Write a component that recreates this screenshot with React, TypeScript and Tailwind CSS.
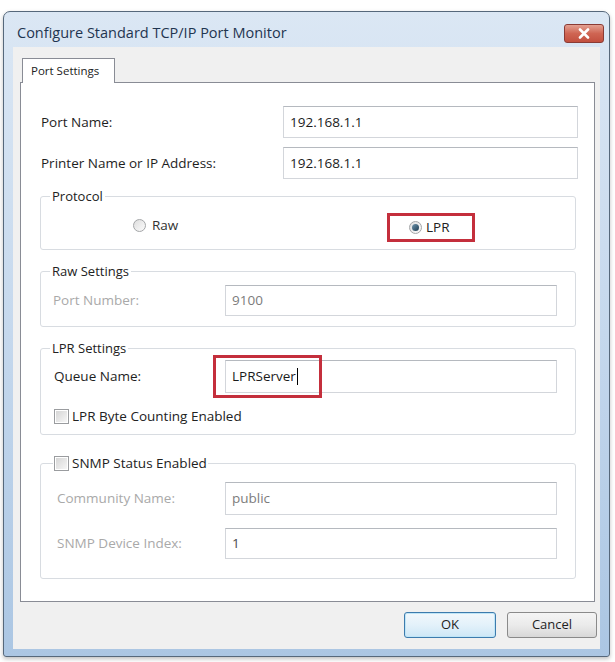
import type { ReactNode } from "react";

// Windows 7 style "Configure Standard TCP/IP Port Monitor" dialog.

function TextBox({
  value,
  disabled,
  className = "",
  children,
}: {
  value: string;
  disabled?: boolean;
  className?: string;
  children?: ReactNode;
}) {
  return (
    <div
      className={`relative flex items-center border border-[#d3d6db] border-t-[#b5b9bf] bg-white pl-[6px] ${
        disabled ? "text-[#7c7c7c]" : "text-[#1b1b1b]"
      } ${className}`}
    >
      <span>{value}</span>
      {children}
    </div>
  );
}

function Radio({ checked }: { checked?: boolean }) {
  return (
    <span className="flex h-[13px] w-[13px] items-center justify-center rounded-full border border-[#a4a6a8] bg-gradient-to-br from-[#dedede] to-[#fbfbfb]">
      {checked && (
        <span className="h-[7px] w-[7px] rounded-full bg-gradient-to-br from-[#6f95ad] to-[#1d3d52]" />
      )}
    </span>
  );
}

function CheckBox() {
  return (
    <span className="flex h-[15px] w-[15px] items-center justify-center border border-[#9a9c9f] bg-white">
      <span className="h-[11px] w-[11px] bg-gradient-to-br from-[#d6d6d6] to-[#f6f6f6]" />
    </span>
  );
}

function Legend({ children, className = "" }: { children: ReactNode; className?: string }) {
  return (
    <legend className={`ml-[9px] px-[2px] text-[13px] leading-[18px] text-[#222] ${className}`}>
      {children}
    </legend>
  );
}

export default function App() {
  return (
    <div className="h-[662px] w-[615px] bg-white pl-[3px] pt-[11px] font-['Open_Sans','Noto_Sans',sans-serif] text-[13.5px]">
      <div className="flex h-[646px] w-[607px] flex-col rounded-t-[7px] rounded-b-[3px] border border-[#56687b] bg-gradient-to-b from-[#dbe7f4] via-[#c5d8ed] to-[#abc6e3] shadow-[0_2px_4px_rgba(0,0,0,0.25)]">
        {/* title bar */}
        <div className="flex h-[35px] shrink-0 items-start pl-[13px] pr-[5px]">
          <span className="mt-[12px] text-[14.5px] leading-[18px] text-[#1f3550]">
            Configure Standard TCP/IP Port Monitor
          </span>
          <button
            type="button"
            className="ml-auto mt-[12px] flex h-[19px] w-[40px] items-center justify-center rounded-[3px] border border-[#8a3b35] bg-gradient-to-b from-[#e3a092] via-[#cf6553] to-[#c2503f]"
          >
            <svg width="12" height="11" viewBox="0 0 12 11">
              <path d="M2 1.5 L10 9.5 M10 1.5 L2 9.5" stroke="white" strokeWidth="2.6" strokeLinecap="round" />
            </svg>
          </button>
        </div>

        {/* client area */}
        <div className="mx-[9px] mb-[7px] flex flex-1 flex-col bg-[#f0f0f0] pt-[11px]">
          <div className="relative z-10 -mb-px ml-[9px] flex h-[25px] w-[93px] items-center border border-b-0 border-[#898c95] bg-white pl-[8px] text-[11.5px] text-[#222]">
            Port Settings
          </div>

          <div className="ml-[7px] mr-[5px] h-[520px] border border-[#898c95] bg-white pl-[20px] pr-[16px] pt-[23px] text-[#1e1e1e]">
            <div className="flex h-[32px] items-center">
              <span className="w-[242px]">Port Name:</span>
              <TextBox value="192.168.1.1" className="h-[32px] flex-1" />
            </div>
            <div className="mt-[9px] flex h-[32px] items-center">
              <span className="w-[242px]">Printer Name or IP Address:</span>
              <TextBox value="192.168.1.1" className="h-[32px] flex-1" />
            </div>

            {/* Protocol */}
            <fieldset className="-ml-px mt-[8px] w-[536px] rounded-[3px] border border-[#d8dce1] pb-[7px] pt-[8px]">
              <Legend>Protocol</Legend>
              <div className="flex h-[29px] items-center pl-[92px]">
                <label className="-mt-[4px] flex w-[254px] items-center gap-[6px] text-[#333]">
                  <Radio />
                  Raw
                </label>
                <label className="flex h-[29px] w-[88px] items-center gap-[4px] border-[3px] border-[#c42f3c] pl-[19px] text-[#222]">
                  <Radio checked />
                  LPR
                </label>
              </div>
            </fieldset>

            {/* Raw Settings */}
            <fieldset className="-ml-px mt-[12px] w-[536px] rounded-[3px] border border-[#d8dce1] pb-[10px] pt-[5px]">
              <Legend>Raw Settings</Legend>
              <div className="flex h-[31px] items-center pl-[12px]">
                <span className="w-[172px] text-[#a9a9a9]">Port Number:</span>
                <TextBox value="9100" disabled className="h-[31px] w-[332px]" />
              </div>
            </fieldset>

            {/* LPR Settings */}
            <fieldset className="-ml-px mt-[12px] w-[536px] rounded-[3px] border border-[#d8dce1] pb-[9px] pt-[3px]">
              <Legend>LPR Settings</Legend>
              <div className="flex h-[33px] items-center pl-[13px]">
                <span className="w-[171px]">Queue Name:</span>
                <TextBox value="LPRServer" className="h-[33px] w-[332px]">
                  <span className="ml-px h-[17px] w-px bg-black" />
                  <span className="absolute -left-[13px] -top-[6px] h-[43px] w-[109px] border-[3px] border-[#c42f3c]" />
                </TextBox>
              </div>
              <label className="mt-[14px] flex h-[18px] items-center gap-[3px] pl-[13px] text-[#222]">
                <CheckBox />
                LPR Byte Counting Enabled
              </label>
            </fieldset>

            {/* SNMP */}
            <fieldset className="-ml-px mt-[19px] w-[536px] rounded-[3px] border border-[#d8dce1] pb-[19px] pt-[10px]">
              <legend className="ml-[12px] flex items-center gap-[3px] px-[1px] leading-[18px] text-[#222]">
                <CheckBox />
                SNMP Status Enabled
              </legend>
              <div className="flex h-[33px] items-center pl-[16px]">
                <span className="w-[168px] text-[#a9a9a9]">Community Name:</span>
                <TextBox value="public" disabled className="h-[33px] w-[332px]" />
              </div>
              <div className="mt-[13px] flex h-[31px] items-center pl-[16px]">
                <span className="w-[168px] text-[#a9a9a9]">SNMP Device Index:</span>
                <TextBox value="1" disabled className="h-[31px] w-[332px] !text-[#4a4a4a]" />
              </div>
            </fieldset>
          </div>

          <div className="mt-[10px] flex justify-end gap-[11px] pr-[3px] text-[13px] text-[#1e1e1e]">
            <button
              type="button"
              className="h-[26px] w-[92px] rounded-[3px] border border-[#3d7bad] bg-gradient-to-b from-[#f2f8fc] via-[#e3f1fa] to-[#cde7f6] shadow-[inset_0_0_0_1px_#bfe5f7]"
            >
              OK
            </button>
            <button
              type="button"
              className="h-[26px] w-[90px] rounded-[3px] border border-[#8a8a8a] bg-gradient-to-b from-[#f4f4f4] via-[#ebebeb] to-[#d8d8d8]"
            >
              Cancel
            </button>
          </div>
        </div>
      </div>
    </div>
  );
}
